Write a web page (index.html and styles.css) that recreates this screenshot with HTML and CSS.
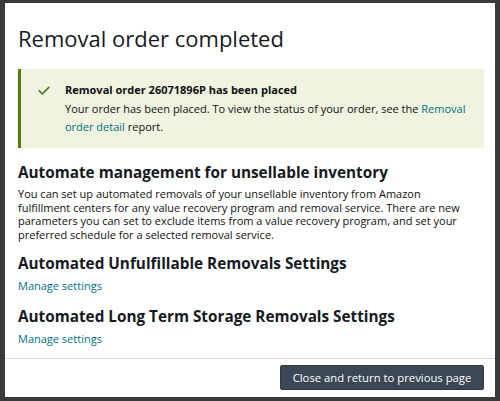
FILE: index.html
```html
<!DOCTYPE html>
<html>
<head>
<meta charset="utf-8">
<link rel="stylesheet" href="styles.css">
</head>
<body>
<div class="backdrop">
  <div class="modal">
    <div class="modal-body">
      <h1 class="title">Removal order completed</h1>
      <div class="alert">
        <svg class="check" width="12" height="9" viewBox="0 0 12 9"><path d="M0.8 4.4 L4.3 7.9 L11.3 0.9" fill="none" stroke="#4d7c0f" stroke-width="1.5"/></svg>
        <div class="alert-text">
          <div class="alert-head">Removal order 26071896P has been placed</div>
          <div class="alert-msg">Your order has been placed. To view the status of your order, see the <a class="link">Removal</a> <a class="link">order detail</a> report.</div>
        </div>
      </div>
      <h2 class="h2 first">Automate management for unsellable inventory</h2>
      <p class="para">You can set up automated removals of your unsellable inventory from Amazon fulfillment centers for any value recovery program and removal service. There are new parameters you can set to exclude items from a value recovery program, and set your preferred schedule for a selected removal service.</p>
      <h2 class="h2 second">Automated Unfulfillable Removals Settings</h2>
      <a class="link small">Manage settings</a>
      <h2 class="h2 third">Automated Long Term Storage Removals Settings</h2>
      <a class="link small">Manage settings</a>
    </div>
    <div class="modal-footer">
      <button class="btn">Close and return to previous page</button>
    </div>
  </div>
</div>
</body>
</html>
```
FILE: styles.css
```css
html, body {
  margin: 0;
  padding: 0;
  width: 500px;
  height: 401px;
  overflow: hidden;
}
body {
  font-family: "Open Sans", "Noto Sans", sans-serif;
  color: #0f1111;
  background: #3a3a3a;
}
.backdrop {
  height: 401px;
  padding: 3px 5px 4px 5px;
  box-sizing: border-box;
  background: #3a3a3a;
}
.modal {
  background: #fff;
  height: 100%;
  display: flex;
  flex-direction: column;
}
.modal-body {
  flex: 1;
  padding: 0 11px 0 13px;
  display: flex;
  flex-direction: column;
  align-items: flex-start;
}
.title {
  margin: 20px 0 0 0;
  font-size: 22px;
  font-weight: 400;
  line-height: 30px;
  color: #16191f;
}
.alert {
  align-self: stretch;
  margin-top: 16px;
  background: #f0f3e0;
  border-left: 3px solid #4d7c0f;
  display: flex;
  padding: 11px 10px 12px 17px;
}
.check {
  margin-top: 6px;
  flex: none;
}
.alert-text {
  margin-left: 15px;
}
.alert-head {
  font-weight: 700;
  font-size: 11px;
  line-height: 20px;
}
.alert-msg {
  font-size: 11px;
  line-height: 18px;
}
.link {
  color: #007185;
}
.h2 {
  margin: 0;
  font-size: 15.3px;
  font-weight: 700;
  line-height: 24px;
  color: #16191f;
}
.h2.first {
  margin-top: 12px;
}
.h2.second {
  margin-top: 10px;
}
.h2.third {
  margin-top: 7px;
}
.para {
  margin: 3px 0 0 0;
  padding-right: 12px;
  font-size: 11px;
  line-height: 13.5px;
}
.small {
  font-size: 11px;
  line-height: 22px;
}
.modal-footer {
  border-top: 1px solid #dddddd;
  display: flex;
  justify-content: flex-end;
  padding: 6px 11px 7px 0;
}
.btn {
  font-family: inherit;
  font-size: 11.3px;
  color: #fff;
  background: #3b4754;
  border: 1px solid #2f3a45;
  border-radius: 2px;
  height: 25px;
  width: 204px;
  padding: 0;
}
```
